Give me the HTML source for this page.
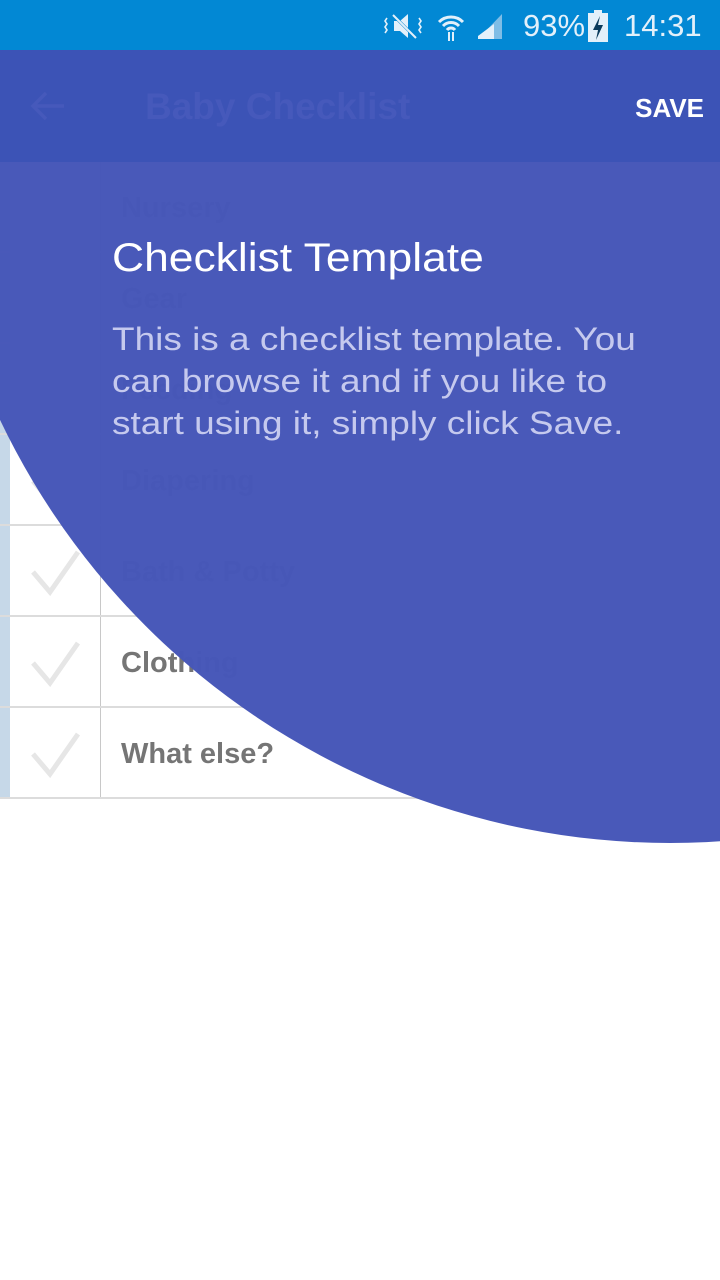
<!DOCTYPE html>
<html><head><meta charset="utf-8"><style>
*{margin:0;padding:0;box-sizing:border-box}
body{width:720px;height:1280px;position:relative;overflow:hidden;background:#fff;font-family:"Liberation Sans",sans-serif}
.sb{position:absolute;left:0;top:0;width:720px;height:50px;background:#0288d4;color:#e3f0fa;font-size:31px;z-index:10}
.ab{position:absolute;left:0;top:50px;width:720px;height:112px;background:#3c53b6;z-index:3}
.row{position:absolute;left:0;width:720px;height:91px;border-bottom:2px solid #dcdcdc}
.strip{position:absolute;left:0;top:0;width:10px;height:100%;background:#c6d8e8}
.vl{position:absolute;left:100px;top:0;width:1px;height:100%;background:#c8c8c8}
.row .t{position:absolute;left:121px;top:30px;font-size:29px;font-weight:bold;color:#757575}
.row svg{position:absolute;left:30px;top:22px}
.circ{position:absolute;left:-72px;top:-641px;width:1484px;height:1484px;border-radius:50%;background:#4656b8;opacity:.985;z-index:2}
.tt{position:absolute;left:112px;top:236px;font-size:40px;color:#fff;z-index:4;transform:scaleX(1.11);transform-origin:left top}
.ds{position:absolute;left:112px;top:318px;width:475px;font-size:32px;line-height:42px;color:#c5c9ee;z-index:4;transform:scaleX(1.155);transform-origin:left top}
</style></head><body>
<div class="sb">
<svg style="position:absolute;left:384px;top:12px" width="40" height="28" viewBox="0 0 40 28"><path d="M10 9h6l8-7v24l-8-7h-6z" fill="#e3f0fa"/><path d="M8 2l24 24" stroke="#0288d4" stroke-width="3"/><path d="M9 3l23 23" stroke="#e3f0fa" stroke-width="2"/><path d="M3 6l-2 3 2 3-2 3 2 3-2 3M35 6l2 3-2 3 2 3-2 3 2 3" stroke="#e3f0fa" stroke-width="1.6" fill="none"/></svg>
<svg style="position:absolute;left:436px;top:12px" width="30" height="30" viewBox="0 0 30 30"><path d="M3 10a17 17 0 0 1 24 0M7 14a11 11 0 0 1 16 0M11 18a5 5 0 0 1 8 0" stroke="#e3f0fa" stroke-width="3" fill="none"/><path d="M13 20v9M17 20v9" stroke="#e3f0fa" stroke-width="2"/></svg>
<svg style="position:absolute;left:476px;top:12px" width="28" height="28" viewBox="0 0 28 28"><path d="M2 27h24V2z" fill="#7fbde6"/><path d="M2 27h16V12L2 24z" fill="#e3f0fa"/></svg>
<span style="position:absolute;left:523px;top:8px">93%</span>
<svg style="position:absolute;left:587px;top:10px" width="22" height="32" viewBox="0 0 22 32"><rect x="7" y="0" width="8" height="3" fill="#e3f0fa"/><rect x="1" y="3" width="20" height="29" fill="#e3f0fa"/><path d="M13 6l-7 14h5l-2 10 7-15h-5z" fill="#0a3b5c"/></svg>
<span style="position:absolute;left:624px;top:8px">14:31</span>
</div>
<div class="ab">
<svg style="position:absolute;left:30px;top:40px" width="36" height="32" viewBox="0 0 36 32"><path d="M34 16H4M16 3L3 16l13 13" stroke="#4659bb" stroke-width="3.5" fill="none"/></svg>
<div style="position:absolute;left:145px;top:36px;font-size:37px;font-weight:bold;color:#4659bb">Baby Checklist</div>
<div style="position:absolute;right:16px;top:43px;font-size:26px;font-weight:bold;color:#fff">SAVE</div>
</div>
<div class="row" style="top:162px"><div class="strip"></div><div class="vl"></div><svg width="50" height="48"><path d="M3 24l17 20 28-40" stroke="#e6e6e6" stroke-width="5" fill="none"/></svg><div class="t">Nursery</div></div>
<div class="row" style="top:253px"><div class="strip"></div><div class="vl"></div><svg width="50" height="48"><path d="M3 24l17 20 28-40" stroke="#e6e6e6" stroke-width="5" fill="none"/></svg><div class="t">Gear</div></div>
<div class="row" style="top:344px"><div class="strip"></div><div class="vl"></div><svg width="50" height="48"><path d="M3 24l17 20 28-40" stroke="#e6e6e6" stroke-width="5" fill="none"/></svg><div class="t">Feeding</div></div>
<div class="row" style="top:435px"><div class="strip"></div><div class="vl"></div><svg width="50" height="48"><path d="M3 24l17 20 28-40" stroke="#e6e6e6" stroke-width="5" fill="none"/></svg><div class="t">Diapering</div></div>
<div class="row" style="top:526px"><div class="strip"></div><div class="vl"></div><svg width="50" height="48"><path d="M3 24l17 20 28-40" stroke="#e6e6e6" stroke-width="5" fill="none"/></svg><div class="t">Bath &amp; Potty</div></div>
<div class="row" style="top:617px"><div class="strip"></div><div class="vl"></div><svg width="50" height="48"><path d="M3 24l17 20 28-40" stroke="#e6e6e6" stroke-width="5" fill="none"/></svg><div class="t">Clothing</div></div>
<div class="row" style="top:708px"><div class="strip"></div><div class="vl"></div><svg width="50" height="48"><path d="M3 24l17 20 28-40" stroke="#e6e6e6" stroke-width="5" fill="none"/></svg><div class="t">What else?</div></div>
<div class="circ"></div>
<div class="tt">Checklist Template</div>
<div class="ds">This is a checklist template. You can browse it and if you like to start using it, simply click Save.</div>
</body></html>
